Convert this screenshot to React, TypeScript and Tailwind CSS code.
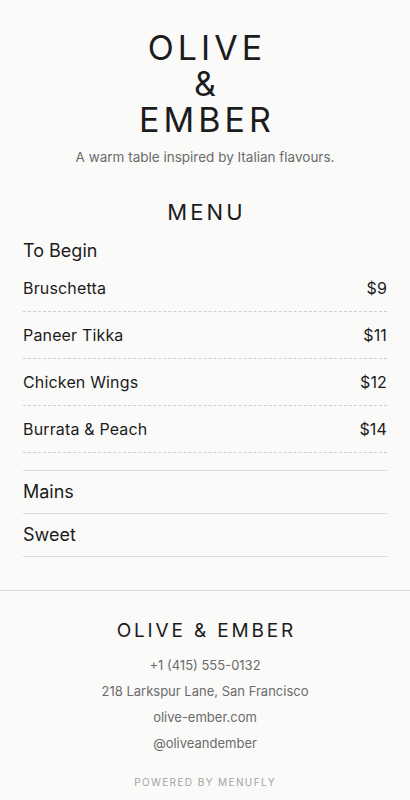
import React from "react";

const items = [
  { name: "Bruschetta", price: "$9" },
  { name: "Paneer Tikka", price: "$11" },
  { name: "Chicken Wings", price: "$12" },
  { name: "Burrata & Peach", price: "$14" },
];

export default function App() {
  return (
    <div
      className="min-h-screen bg-[#fafaf9] text-[#1c1c1c]"
      style={{ fontFamily: "Inter, 'Liberation Sans', sans-serif" }}
    >
      <header className="pt-[30px] text-center">
        <h1 className="text-[34px] leading-[36px] tracking-[0.12em] font-normal pl-[0.12em]">
          OLIVE
          <br />&amp;
          <br />
          EMBER
        </h1>
        <p className="mt-[10px] text-[13.5px] leading-[18px] text-[#6b6b6b]">
          A warm table inspired by Italian flavours.
        </p>
      </header>

      <section className="px-[23px] pt-[33px]">
        <h2 className="text-center text-[22px] leading-[26px] tracking-[0.14em] pl-[0.14em]">MENU</h2>
        <h3 className="mt-[14px] text-[18px] leading-[24px]">To Begin</h3>
        <ul className="mt-[2px]">
          {items.map((it) => (
            <li
              key={it.name}
              className="flex justify-between items-center py-[12px] text-[16px] leading-[22px] tracking-[0.01em] border-b border-dashed border-[#cfcfcf]"
            >
              <span>{it.name}</span>
              <span>{it.price}</span>
            </li>
          ))}
        </ul>
        <div className="mt-[17px] border-t border-[#dcdcdc]">
          <div className="py-[9px] text-[18px] leading-[24px] border-b border-[#dcdcdc]">Mains</div>
          <div className="py-[9px] text-[18px] leading-[24px] border-b border-[#dcdcdc]">Sweet</div>
        </div>
      </section>

      <footer className="mt-[33px] border-t border-[#dcdcdc] pt-[28px] pb-[12px] text-center">
        <div className="text-[19px] leading-[24px] tracking-[0.15em] pl-[0.15em]">OLIVE &amp; EMBER</div>
        <div className="mt-[9px] flex flex-col text-[13px] leading-[26px] text-[#6b6b6b]">
          <span>+1 (415) 555-0132</span>
          <span>218 Larkspur Lane, San Francisco</span>
          <span>olive-ember.com</span>
          <span>@oliveandember</span>
        </div>
        <div className="mt-[19px] text-[10px] leading-[14px] tracking-[0.14em] text-[#a3a3a3]">
          POWERED BY MENUFLY
        </div>
      </footer>
    </div>
  );
}
